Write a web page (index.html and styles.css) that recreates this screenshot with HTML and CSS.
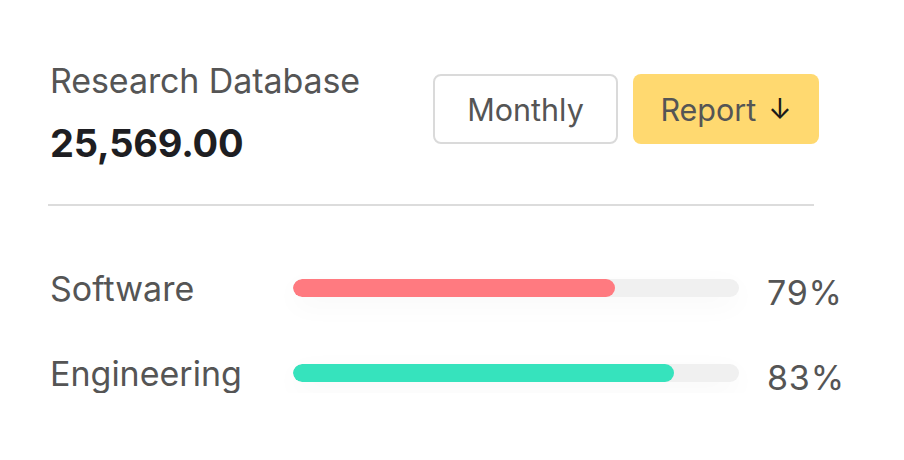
FILE: index.html
```html
<!DOCTYPE html>
<html>
<head>
<meta charset="utf-8">
<link rel="stylesheet" href="styles.css">
</head>
<body>
<div class="card">
  <div class="header">
    <div class="summary">
      <div class="title">Research Database</div>
      <div class="amount">25,569.00</div>
    </div>
    <div class="actions">
      <button class="btn btn-outline">Monthly</button>
      <button class="btn btn-primary">Report <span class="arrow">↓</span></button>
    </div>
  </div>
  <div class="divider"></div>
  <div class="rows">
    <div class="row">
      <div class="label">Software</div>
      <div class="track"><div class="fill fill-red" style="width:72.2%"></div></div>
      <div class="pct">79%</div>
    </div>
    <div class="row">
      <div class="label">Engineering</div>
      <div class="track"><div class="fill fill-green" style="width:85.4%"></div></div>
      <div class="pct">83%</div>
    </div>
  </div>
</div>
</body>
</html>
```

FILE: styles.css
```css
html, body {
  margin: 0;
  padding: 0;
  background: #ffffff;
}
body {
  font-family: "Inter", "Liberation Sans", sans-serif;
  color: #555555;
}
.card {
  width: 766px;
  padding: 61px 0 0 48px;
}
.header {
  display: flex;
  align-items: flex-start;
}
.summary {
  width: 385px;
  flex-shrink: 0;
  padding-left: 2px;
  box-sizing: border-box;
}
.title {
  font-size: 34px;
  line-height: 40px;
  color: #555555;
  letter-spacing: -0.1px;
}
.amount {
  margin-top: 22px;
  font-size: 38px;
  line-height: 40px;
  font-weight: 700;
  color: #1e1e22;
  letter-spacing: -0.2px;
}
.actions {
  display: flex;
  flex-shrink: 0;
  gap: 15px;
  margin-top: 13px;
}
.btn {
  height: 70px;
  border-radius: 8px;
  font-family: inherit;
  font-size: 30.5px;
  color: #555555;
  padding: 0;
  box-sizing: border-box;
  display: flex;
  align-items: center;
  justify-content: center;
  flex-shrink: 0;
}
.btn-outline {
  width: 185px;
  background: #ffffff;
  border: 2px solid #dadada;
}
.btn-primary {
  width: 186px;
  background: #ffd970;
  border: none;
}
.arrow {
  color: #1a1a1a;
  font-size: 28px;
  margin-left: 12px;
}
.divider {
  margin-top: 41px;
  height: 2px;
  background: #dcdcdc;
}
.rows {
  display: flex;
  flex-direction: column;
  gap: 45px;
  margin-top: 62px;
}
.row {
  display: flex;
  align-items: center;
  height: 40px;
}
.label {
  width: 245px;
  flex-shrink: 0;
  padding-left: 2px;
  box-sizing: border-box;
  font-size: 34px;
  color: #555555;
}
.track {
  width: 446px;
  flex-shrink: 0;
  height: 18px;
  border-radius: 9px;
  background: #f0f0f0;
  box-shadow: 0 8px 28px rgba(0, 0, 0, 0.035);
  overflow: hidden;
}
.fill {
  height: 100%;
  border-radius: 9px;
}
.fill-red { background: #ff7a80; }
.fill-green { background: #36e3bd; }
.pct {
  flex-shrink: 0;
  margin-left: 28px;
  font-size: 34px;
  letter-spacing: 0.8px;
  color: #555555;
  padding-top: 8px;
}
```
